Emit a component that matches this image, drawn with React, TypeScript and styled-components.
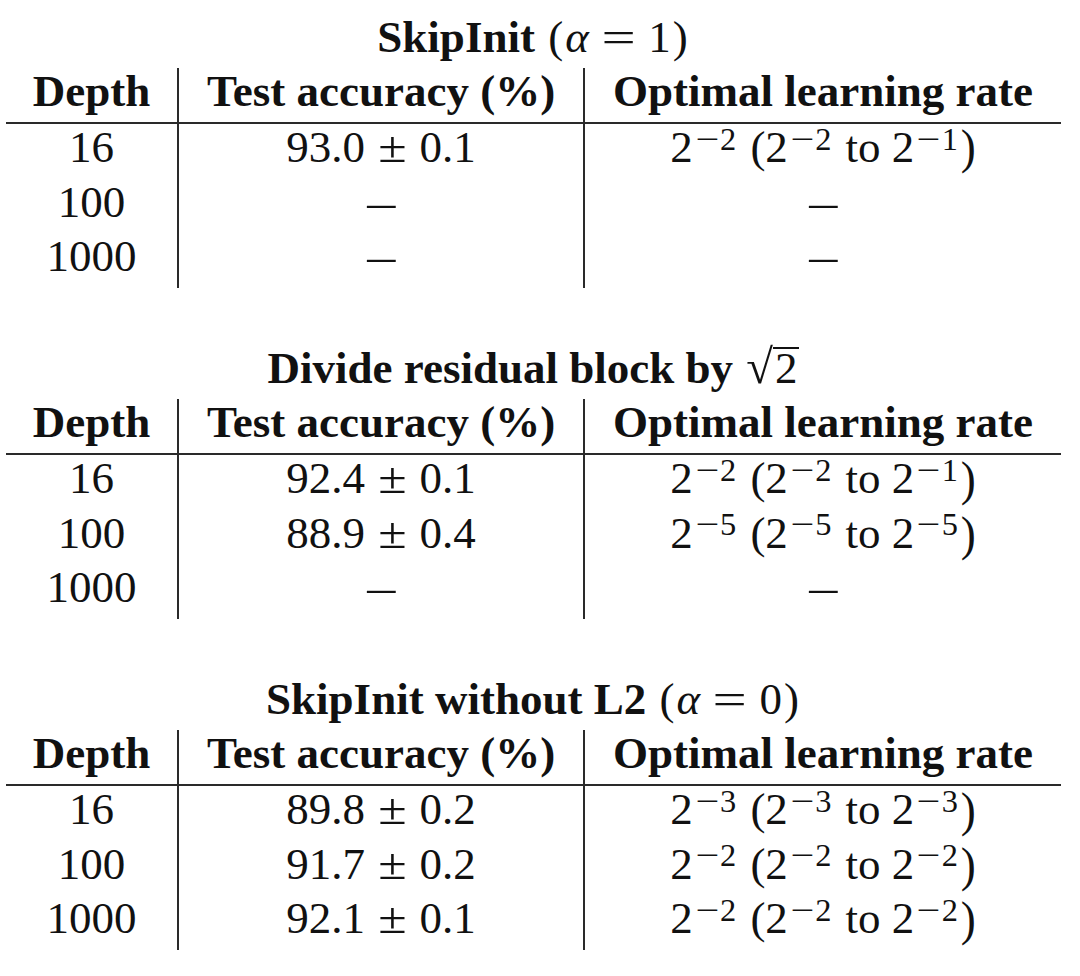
import React from "react";
import styled, { createGlobalStyle } from "styled-components";

const GlobalStyle = createGlobalStyle`
  html, body {
    margin: 0;
    padding: 0;
    background: #ffffff;
  }
  body {
    font-family: "Liberation Serif", "Times New Roman", serif;
    color: #111111;
  }
`;

const Page = styled.div`
  width: 1080px;
  height: 976px;
  padding: 14px 0 0 6px;
  box-sizing: border-box;
  display: flex;
  flex-direction: column;
  gap: 57.5px;
  overflow: hidden;
`;

const Block = styled.section`
  width: 1055px;
  display: flex;
  flex-direction: column;
`;

const Title = styled.h2`
  margin: 0 0 8px;
  font-size: 45px;
  line-height: 46px;
  font-weight: 400;
  text-align: center;
  white-space: nowrap;
`;

const Bold = styled.b`
  font-weight: 700;
`;

const Greek = styled.i`
  font-style: italic;
`;

const Paren = styled.span`
  display: inline-block;
  margin: 0 2px;
`;

const Eq = styled.span`
  display: inline-block;
  margin: 0 17px;
  transform: scaleX(1.35);
`;

const Root = styled.span`
  display: inline-block;
  margin-left: 2px;
`;

const RootSign = styled.span`
  display: inline-block;
  font-size: 1.08em;
  line-height: 38px;
`;

const Radicand = styled.span`
  display: inline-block;
  border-top: 2px solid #111;
  line-height: 38px;
  padding: 0 2px;
`;

const Table = styled.table`
  border-collapse: collapse;
  table-layout: fixed;
  width: 1055px;
`;

const Col = styled.col<{ $w: number }>`
  width: ${(p) => p.$w}px;
`;

const HeadCell = styled.th<{ $divider?: boolean }>`
  padding: 0 0 8px;
  height: 46px;
  font-size: 45px;
  line-height: 46px;
  font-weight: 700;
  text-align: center;
  white-space: nowrap;
  border-bottom: 2px solid #2a2a2a;
  border-left: ${(p) => (p.$divider ? "2px solid #2a2a2a" : "none")};
`;

const Cell = styled.td<{ $divider?: boolean }>`
  padding: 0 0 8.5px;
  height: 46px;
  font-size: 45px;
  line-height: 46px;
  text-align: center;
  white-space: nowrap;
  border-left: ${(p) => (p.$divider ? "2px solid #2a2a2a" : "none")};
`;

const Sup = styled.sup`
  font-size: 0.72em;
  line-height: 0;
  vertical-align: 0.38em;
  margin: 0 3px 0 4px;
`;

const Minus = styled.span`
  display: inline-block;
  margin: 0 4px 0 1px;
  transform: scaleX(1.3);
`;

const Close = styled.span`
  display: inline-block;
  margin-left: 0;
  transform: scaleY(1.1);
`;

const Pm = styled.span`
  display: inline-block;
  margin: 0 15px;
  transform: scaleX(1.15);
`;

const DashMark = styled.span`
  display: inline-block;
  transform: scaleX(1.25);
`;

const Dash = () => <DashMark>–</DashMark>;

const Exp = ({ n }: { n: number }) => (
  <Sup>
    <Minus>−</Minus>
    {n}
  </Sup>
);

const Rate = ({ a, b, c }: { a: number; b: number; c: number }) => (
  <span>
    2<Exp n={a} /> (2<Exp n={b} /> to 2<Exp n={c} />
    <Close>)</Close>
  </span>
);

const Acc = ({ v, e }: { v: string; e: string }) => (
  <span>
    {v}
    <Pm>±</Pm>
    {e}
  </span>
);

type Row = { depth: string; acc: React.ReactNode; rate: React.ReactNode };

const ResultTable = ({ title, rows }: { title: React.ReactNode; rows: Row[] }) => (
  <Block>
    <Title>{title}</Title>
    <Table>
      <colgroup>
        <Col $w={172} />
        <Col $w={406} />
        <Col $w={477} />
      </colgroup>
      <thead>
        <tr>
          <HeadCell>Depth</HeadCell>
          <HeadCell $divider>Test accuracy (%)</HeadCell>
          <HeadCell $divider>Optimal learning rate</HeadCell>
        </tr>
      </thead>
      <tbody>
        {rows.map((r) => (
          <tr key={r.depth}>
            <Cell>{r.depth}</Cell>
            <Cell $divider>{r.acc}</Cell>
            <Cell $divider>{r.rate}</Cell>
          </tr>
        ))}
      </tbody>
    </Table>
  </Block>
);

export default function App() {
  return (
    <>
      <GlobalStyle />
      <Page>
        <ResultTable
          title={
            <>
              <Bold>SkipInit</Bold> <Paren>(</Paren>
              <Greek>α</Greek>
              <Eq>=</Eq>1<Paren>)</Paren>
            </>
          }
          rows={[
            { depth: "16", acc: <Acc v="93.0" e="0.1" />, rate: <Rate a={2} b={2} c={1} /> },
            { depth: "100", acc: <Dash />, rate: <Dash /> },
            { depth: "1000", acc: <Dash />, rate: <Dash /> },
          ]}
        />
        <ResultTable
          title={
            <>
              <Bold>Divide residual block by</Bold>{" "}
              <Root>
                <RootSign>√</RootSign>
                <Radicand>2</Radicand>
              </Root>
            </>
          }
          rows={[
            { depth: "16", acc: <Acc v="92.4" e="0.1" />, rate: <Rate a={2} b={2} c={1} /> },
            { depth: "100", acc: <Acc v="88.9" e="0.4" />, rate: <Rate a={5} b={5} c={5} /> },
            { depth: "1000", acc: <Dash />, rate: <Dash /> },
          ]}
        />
        <ResultTable
          title={
            <>
              <Bold>SkipInit without L2</Bold> <Paren>(</Paren>
              <Greek>α</Greek>
              <Eq>=</Eq>0<Paren>)</Paren>
            </>
          }
          rows={[
            { depth: "16", acc: <Acc v="89.8" e="0.2" />, rate: <Rate a={3} b={3} c={3} /> },
            { depth: "100", acc: <Acc v="91.7" e="0.2" />, rate: <Rate a={2} b={2} c={2} /> },
            { depth: "1000", acc: <Acc v="92.1" e="0.1" />, rate: <Rate a={2} b={2} c={2} /> },
          ]}
        />
      </Page>
    </>
  );
}
